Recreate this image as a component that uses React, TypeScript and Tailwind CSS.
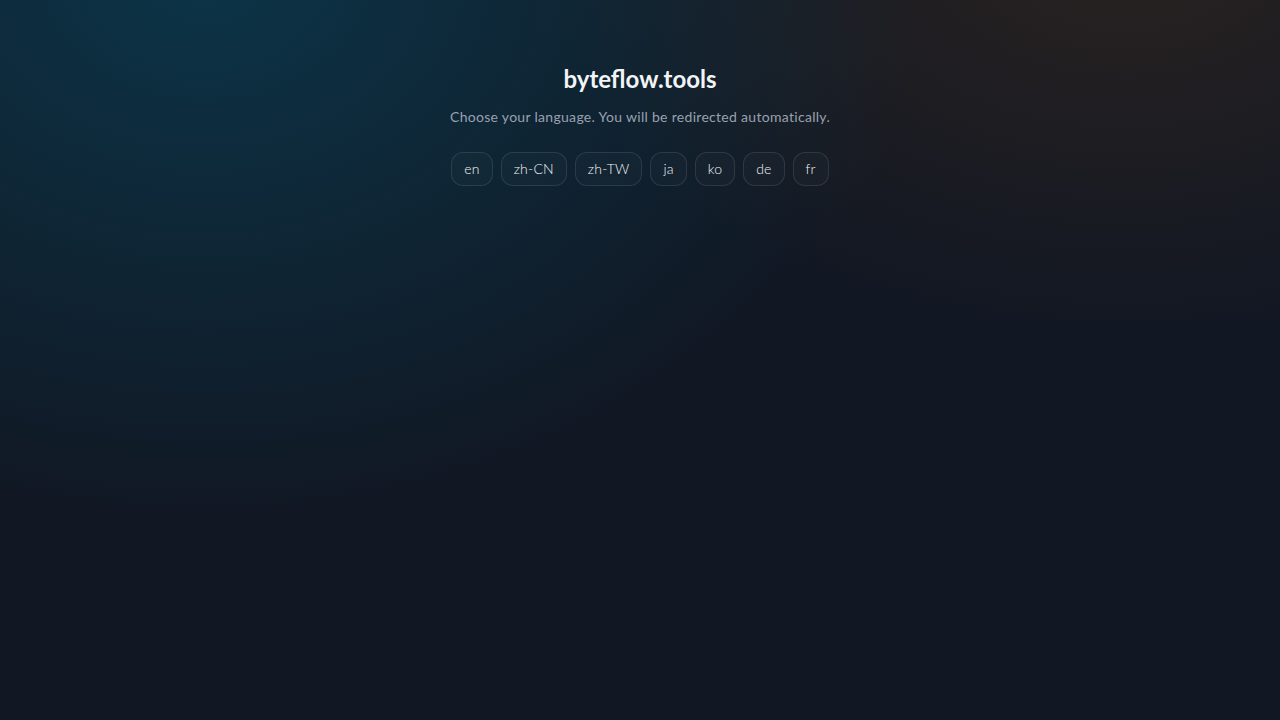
const languages = ["en", "zh-CN", "zh-TW", "ja", "ko", "de", "fr"];

export default function App() {
  return (
    <div
      className="relative min-h-screen w-full overflow-hidden bg-[#111723] font-['Lato','Noto_Sans',sans-serif] text-gray-100"
      style={{
        backgroundImage:
          "radial-gradient(ellipse 720px 560px at 16% -4%, rgba(8,72,96,0.6), rgba(8,72,96,0) 100%), radial-gradient(ellipse 600px 400px at 88% -8%, rgba(66,46,30,0.5), rgba(66,46,30,0) 100%)",
      }}
    >
      <main className="flex flex-col items-center pt-[63px]">
        <h1 className="text-2xl font-bold text-gray-100">byteflow.tools</h1>
        <p className="mt-3 text-sm tracking-[0.3px] text-gray-400">
          Choose your language. You will be redirected automatically.
        </p>
        <div className="mt-[25px] flex items-center gap-2">
          {languages.map((lang) => (
            <a
              key={lang}
              href={`/${lang}/`}
              className="rounded-xl border border-white/10 bg-white/[0.02] px-3 py-1.5 text-sm font-light tracking-[0.2px] text-gray-100 hover:bg-white/5"
            >
              {lang}
            </a>
          ))}
        </div>
      </main>
    </div>
  );
}
